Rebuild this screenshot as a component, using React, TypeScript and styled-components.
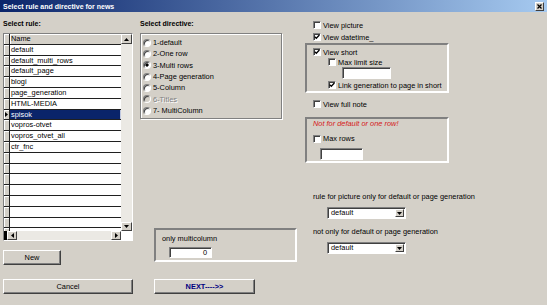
import styled, { createGlobalStyle } from 'styled-components';

const GlobalStyle = createGlobalStyle`
  html, body { margin: 0; padding: 0; }
  body {
    width: 547px;
    height: 305px;
    overflow: hidden;
    background: #d4d0c8;
    font-family: 'Liberation Sans', Arial, sans-serif;
    font-size: 7.4px;
    color: #000;
  }
`;

const rules = [
  'default',
  'default_multi_rows',
  'default_page',
  'blogi',
  'page_generation',
  'HTML-MEDIA',
  'spisok',
  'vopros-otvet',
  'vopros_otvet_all',
  'ctr_fnc',
];
const emptyRows = 10;

const directives = [
  { label: '1-default' },
  { label: '2-One row' },
  { label: '3-Multi rows', checked: true },
  { label: '4-Page generation' },
  { label: '5-Column' },
  { label: '6-Titles', disabled: true },
  { label: '7- MultiColumn' },
];

const Window = styled.div`
  width: 547px;
  height: 305px;
  display: flex;
  flex-direction: column;
  background: #d4d0c8;
`;

const TitleBar = styled.div`
  height: 12px;
  flex: none;
  display: flex;
  align-items: center;
  justify-content: space-between;
  padding: 0 3px;
  background: linear-gradient(to right, #0a246a, #a6caf0);
  color: #fff;
  font-weight: bold;
  font-size: 7px;
`;

const CloseBtn = styled.div`
  width: 9px;
  height: 9px;
  box-sizing: border-box;
  background: #d4d0c8;
  border: 1px solid;
  border-color: #fff #404040 #404040 #fff;
  display: flex;
  align-items: center;
  justify-content: center;
`;

const Body = styled.div`
  flex: 1;
  display: flex;
  padding-left: 3px;
`;

const Column = styled.div<{ $w?: number; $ml?: number }>`
  display: flex;
  flex-direction: column;
  width: ${(p) => (p.$w ? `${p.$w}px` : 'auto')};
  flex: ${(p) => (p.$w ? 'none' : '1')};
  margin-left: ${(p) => p.$ml ?? 0}px;
`;

const SectionLabel = styled.div`
  margin-top: 6px;
  height: 12px;
  line-height: 12px;
  font-weight: bold;
  font-size: 7px;
`;

/* ---- rule grid ---- */

const GridFrame = styled.div`
  margin-top: 3px;
  width: 130px;
  height: 208px;
  box-sizing: border-box;
  border: 1px solid;
  border-color: #808080 #fff #fff #808080;
  display: grid;
  grid-template-columns: 1fr 11px;
  grid-template-rows: 1fr 9px;
  overflow: hidden;
  background: #fff;
`;

const RowsArea = styled.div`
  overflow: hidden;
  background: #fff;
`;

const Row = styled.div`
  display: grid;
  grid-template-columns: 6px 1fr;
  height: 10.8px;
  box-sizing: border-box;
  border-bottom: 1px solid #202020;
`;

const Indicator = styled.div`
  box-sizing: border-box;
  background: #d4d0c8;
  border-right: 1px solid #202020;
  box-shadow: inset 1px 1px #fff;
  display: flex;
  align-items: center;
  justify-content: center;
`;

const NameCell = styled.div<{ $head?: boolean; $selected?: boolean }>`
  padding-left: 1px;
  line-height: 10px;
  white-space: nowrap;
  overflow: hidden;
  background: ${(p) => (p.$selected ? '#0a246a' : p.$head ? '#d4d0c8' : '#fff')};
  color: ${(p) => (p.$selected ? '#fff' : '#000')};
  box-shadow: ${(p) =>
    p.$head ? 'inset 1px 1px #fff' : p.$selected ? 'inset -1px 0 #c0c8e0' : 'none'};
`;

const VScroll = styled.div`
  display: flex;
  flex-direction: column;
  justify-content: space-between;
  background: #ebe9e4;
`;

const HScroll = styled.div`
  display: flex;
  justify-content: space-between;
  background: #ebe9e4;
  border-left: 3px solid #000;
`;

const Corner = styled.div`
  background: #fff;
`;

const ScrollBtn = styled.div<{ $w: number; $h: number }>`
  width: ${(p) => p.$w}px;
  height: ${(p) => p.$h}px;
  box-sizing: border-box;
  background: #d4d0c8;
  border: 1px solid;
  border-color: #fff #404040 #404040 #fff;
  display: flex;
  align-items: center;
  justify-content: center;
`;

const Arrow = ({ dir }: { dir: 'up' | 'down' | 'left' | 'right' }) => {
  const pts = {
    up: '0,3 5,3 2.5,0',
    down: '0,0 5,0 2.5,3',
    left: '3,0 3,5 0,2.5',
    right: '0,0 0,5 3,2.5',
  }[dir];
  const vertical = dir === 'up' || dir === 'down';
  return (
    <svg width={vertical ? 5 : 3} height={vertical ? 3 : 5} viewBox={vertical ? '0 0 5 3' : '0 0 3 5'}>
      <polygon points={pts} fill="#000" />
    </svg>
  );
};

/* ---- directive ---- */

const DirectiveBox = styled.div`
  margin-top: 3px;
  width: 142px;
  height: 86px;
  box-sizing: border-box;
  border: 1px solid #808080;
  box-shadow: inset 1px 1px #fff, 1px 1px #fff;
  padding: 3px 0 0 2px;
`;

const RadioRow = styled.div<{ $disabled?: boolean }>`
  height: 11.33px;
  display: flex;
  align-items: center;
  gap: 2px;
  color: ${(p) => (p.$disabled ? '#808080' : '#000')};
  text-shadow: ${(p) => (p.$disabled ? '1px 1px #fff' : 'none')};
`;

const RadioDot = styled.span<{ $checked?: boolean; $disabled?: boolean }>`
  width: 8px;
  height: 8px;
  flex: none;
  box-sizing: border-box;
  border-radius: 50%;
  border: 1px solid;
  border-color: #808080 #fff #fff #808080;
  background: ${(p) =>
    p.$checked
      ? 'radial-gradient(circle, #000 0 1.4px, #fff 1.8px)'
      : p.$disabled
        ? '#d4d0c8'
        : '#fff'};
  box-shadow: inset 1px 1px #404040;
`;

const Panel = styled.div<{ $w: number; $h: number; $mt?: number; $ml?: number; $pt?: number }>`
  width: ${(p) => p.$w}px;
  height: ${(p) => p.$h}px;
  margin-top: ${(p) => p.$mt ?? 0}px;
  margin-left: ${(p) => p.$ml ?? 0}px;
  padding: ${(p) => p.$pt ?? 0}px 0 0 6px;
  box-sizing: border-box;
  border: 2px solid;
  border-color: #808080 #fff #fff #808080;
  display: flex;
  flex-direction: column;
  align-items: flex-start;
`;

const Caption = styled.div<{ $mt?: number; $pl?: number; $h?: number }>`
  margin-top: ${(p) => p.$mt ?? 0}px;
  padding-left: ${(p) => p.$pl ?? 0}px;
  height: ${(p) => p.$h ?? 12}px;
  line-height: ${(p) => p.$h ?? 12}px;
  white-space: nowrap;
`;

const Warning = styled(Caption)`
  color: #d42020;
  font-style: italic;
`;

const Field = styled.div<{ $w: number; $h?: number; $mt?: number; $ml?: number; $right?: boolean }>`
  width: ${(p) => p.$w}px;
  height: ${(p) => p.$h ?? 12}px;
  margin-top: ${(p) => p.$mt ?? 0}px;
  margin-left: ${(p) => p.$ml ?? 0}px;
  box-sizing: border-box;
  background: #fff;
  border: 1px solid;
  border-color: #808080 #fff #fff #808080;
  box-shadow: inset 1px 1px #404040;
  padding: 0 4px 0 3px;
  text-align: ${(p) => (p.$right ? 'right' : 'left')};
  line-height: ${(p) => (p.$h ?? 12) - 2}px;
`;

const Button = styled.button<{ $w: number; $mt: number; $ml?: number; $bold?: boolean }>`
  width: ${(p) => p.$w}px;
  height: 15px;
  margin: ${(p) => p.$mt}px 0 0 ${(p) => p.$ml ?? 0}px;
  padding: 0;
  flex: none;
  background: #d4d0c8;
  border: 1px solid;
  border-color: #fff #404040 #404040 #fff;
  box-shadow: inset -1px -1px #808080;
  font-family: 'Liberation Sans', Arial, sans-serif;
  font-size: 7.4px;
  font-weight: ${(p) => (p.$bold ? 'bold' : 'normal')};
  color: ${(p) => (p.$bold ? '#000080' : '#000')};
`;

/* ---- options ---- */

const CheckRow = styled.div<{ $mt?: number; $pl?: number; $h?: number }>`
  margin-top: ${(p) => p.$mt ?? 0}px;
  padding-left: ${(p) => p.$pl ?? 0}px;
  height: ${(p) => p.$h ?? 12}px;
  display: flex;
  align-items: center;
  gap: 2px;
  white-space: nowrap;
`;

const Box = styled.span`
  width: 8px;
  height: 8px;
  flex: none;
  box-sizing: border-box;
  background: #fff;
  border: 1px solid;
  border-color: #808080 #fff #fff #808080;
  box-shadow: inset 1px 1px #404040;
  display: flex;
  align-items: center;
  justify-content: center;
`;

const Check = ({ label, checked, ...rest }: { label: string; checked?: boolean; $mt?: number; $pl?: number; $h?: number }) => (
  <CheckRow {...rest}>
    <Box>
      {checked && (
        <svg width="6" height="6" viewBox="0 0 6 6">
          <path d="M0.6 2.6 L2.3 4.3 L5.4 1" stroke="#000" strokeWidth="1.3" fill="none" />
        </svg>
      )}
    </Box>
    <span>{label}</span>
  </CheckRow>
);

const Select = styled.div<{ $mt: number }>`
  margin: ${(p) => p.$mt}px 0 0 22px;
  width: 79px;
  height: 12px;
  box-sizing: border-box;
  background: #fff;
  border: 1px solid;
  border-color: #808080 #fff #fff #808080;
  box-shadow: inset 1px 1px #404040;
  display: flex;
  align-items: stretch;
`;

const SelectText = styled.div`
  flex: 1;
  padding-left: 3px;
  line-height: 10px;
`;

const DropBtn = styled(ScrollBtn)`
  margin: 1px 1px 1px 0;
`;

const Dropdown = ({ value, mt }: { value: string; mt: number }) => (
  <Select $mt={mt}>
    <SelectText>{value}</SelectText>
    <DropBtn $w={9} $h={8}>
      <Arrow dir="down" />
    </DropBtn>
  </Select>
);

export default function App() {
  return (
    <>
      <GlobalStyle />
      <Window>
        <TitleBar>
          <span>Select rule and directive for news</span>
          <CloseBtn>
            <svg width="5" height="5" viewBox="0 0 5 5">
              <path d="M0.5 0.5 L4.5 4.5 M4.5 0.5 L0.5 4.5" stroke="#000" strokeWidth="1.2" />
            </svg>
          </CloseBtn>
        </TitleBar>
        <Body>
          <Column $w={131}>
            <SectionLabel>Select rule:</SectionLabel>
            <GridFrame>
              <RowsArea>
                <Row>
                  <Indicator />
                  <NameCell $head>Name</NameCell>
                </Row>
                {rules.map((r) => (
                  <Row key={r}>
                    <Indicator>
                      {r === 'spisok' && (
                        <svg width="3" height="5" viewBox="0 0 3 5">
                          <polygon points="0,0 0,5 3,2.5" fill="#000" />
                        </svg>
                      )}
                    </Indicator>
                    <NameCell $selected={r === 'spisok'}>{r}</NameCell>
                  </Row>
                ))}
                {Array.from({ length: emptyRows }, (_, i) => (
                  <Row key={`e${i}`}>
                    <Indicator />
                    <NameCell />
                  </Row>
                ))}
              </RowsArea>
              <VScroll>
                <ScrollBtn $w={11} $h={10}>
                  <Arrow dir="up" />
                </ScrollBtn>
                <ScrollBtn $w={11} $h={9}>
                  <Arrow dir="down" />
                </ScrollBtn>
              </VScroll>
              <HScroll>
                <ScrollBtn $w={10} $h={9}>
                  <Arrow dir="left" />
                </ScrollBtn>
                <ScrollBtn $w={10} $h={9}>
                  <Arrow dir="right" />
                </ScrollBtn>
              </HScroll>
              <Corner />
            </GridFrame>
            <Button $w={58} $mt={9}>New</Button>
            <Button $w={130} $mt={14}>Cancel</Button>
          </Column>

          <Column $w={157} $ml={6}>
            <SectionLabel>Select directive:</SectionLabel>
            <DirectiveBox>
              {directives.map((d) => (
                <RadioRow key={d.label} $disabled={d.disabled}>
                  <RadioDot $checked={d.checked} $disabled={d.disabled} />
                  <span>{d.label}</span>
                </RadioRow>
              ))}
            </DirectiveBox>
            <Panel $w={143} $h={34} $mt={109} $ml={14} $pt={3}>
              <Caption>only multicolumn</Caption>
              <Field $w={43} $h={11} $mt={2} $ml={7} $right>
                0
              </Field>
            </Panel>
            <Button $w={101} $mt={17} $ml={14} $bold>
              NEXT----&gt;&gt;
            </Button>
          </Column>

          <Column $ml={8}>
            <Check label="View picture" $mt={7} $pl={8} />
            <Check label="View datetime_" checked $pl={8} />
            <Panel $w={144} $h={50} $pt={2}>
              <Check label="View short" checked $h={10} />
              <Check label="Max limit size" $h={10} $pl={15} />
              <Field $w={49} $ml={29} />
              <Check label="Link generation to page in short" checked $h={10} $pl={15} $mt={1} />
            </Panel>
            <Check label="View full note" $mt={5} $pl={8} />
            <Panel $w={144} $h={46} $mt={7}>
              <Warning $h={10}>Not for default or one row!</Warning>
              <Check label="Max rows" $mt={4} $h={11} />
              <Field $w={43} $mt={4} $ml={7} />
            </Panel>
            <Caption $mt={28} $pl={8}>
              rule for picture only for default or page generation
            </Caption>
            <Dropdown value="default" mt={4} />
            <Caption $mt={7} $pl={8}>
              not only for default or page generation
            </Caption>
            <Dropdown value="default" mt={4} />
          </Column>
        </Body>
      </Window>
    </>
  );
}
